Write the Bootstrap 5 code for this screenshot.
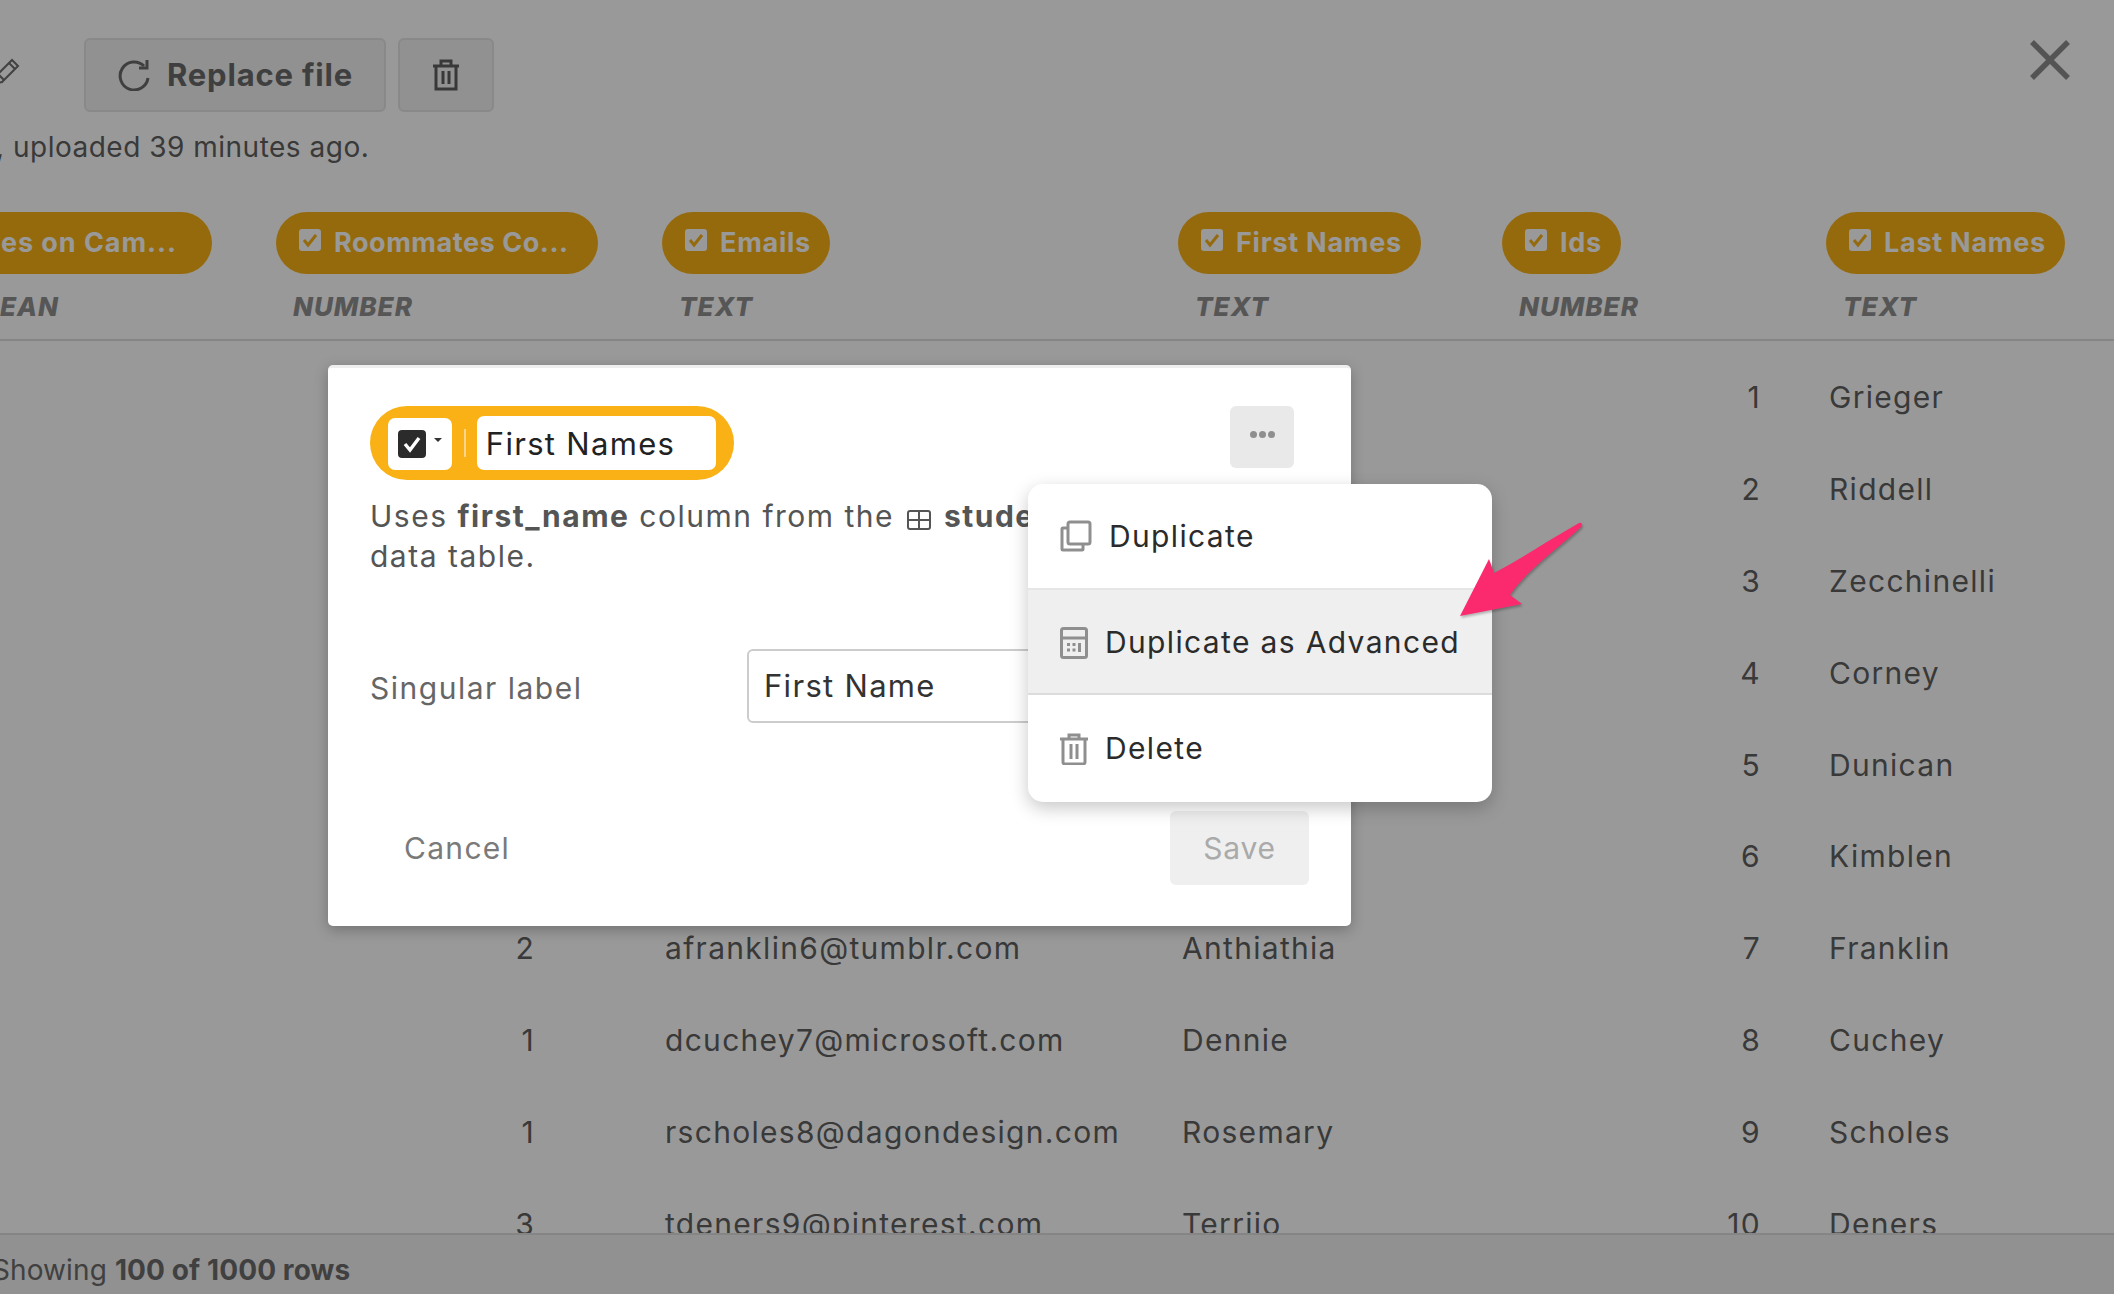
<!doctype html>
<html lang="en">
<head>
<meta charset="utf-8">
<title>Data table columns</title>
<link href="https://cdn.jsdelivr.net/npm/bootstrap@5.3.0/dist/css/bootstrap.min.css" rel="stylesheet">
<style>
html,body{height:100%}
body{font-family:"Inter","Open Sans","Liberation Sans",sans-serif;background:#fff;color:#5f5f5f;overflow:hidden;position:relative;font-size:28px}
.sheet{height:1294px;overflow:hidden}
.topbar{padding:38px 44px 0 0;height:112px}
.pencil-wrap{width:84px;height:74px;overflow:hidden}
.tool-btn{height:74px;background:#f2f2f2;border:2px solid #e4e4e4;border-radius:6px;color:#6a6a6a;font-weight:700;font-size:31px;letter-spacing:.8px}
.tool-btn.replace{width:302px;gap:16px}
.tool-btn.bin{width:96px;margin-left:12px}
.close-x{margin-top:2px}
.subline{height:68px;line-height:71px;margin-left:-4px;font-size:28px;letter-spacing:.5px}
.cols{display:grid;grid-template-columns:276px 386px 516px 324px 324px 288px}
.pill-row{margin-top:32px}
.col-pill{height:62px;border-radius:31px;background:#f9b115;color:#fff;font-weight:700;font-size:27px;padding:0 19px 0 23px;gap:13px;white-space:nowrap;letter-spacing:.75px}
.col-pill svg{margin-top:-6px;flex:none}
.pill-end{margin-right:64px;padding-right:35px;letter-spacing:.95px}
.pill-wide{width:322px;letter-spacing:.55px}
.clip-left{overflow:hidden}
.type-row{height:67px;border-bottom:2px solid #dedede;font-style:italic;font-weight:800;font-size:26px;color:#8f8f8f;padding-top:18px;letter-spacing:1px}
.type-row>div{padding-left:17px;line-height:30px}
.type-row>.bool{padding:0 217px 0 0;white-space:nowrap;overflow:hidden}
.table-area{height:892px;overflow:hidden;padding-top:11px}
.data-row{height:91.9px;line-height:91.9px;font-size:30px;color:#5f5f5f;letter-spacing:1.3px}
.num-a{text-align:right;padding-right:127px}
.num-b{text-align:right;padding-right:65px}
.txt{padding-left:3px}
.txt-b{padding-left:4px}
.foot-bar{height:61px;line-height:71px;border-top:2px solid #dedede;background:#f2f2f2;margin-left:-8px;font-size:28px;color:#6c6c6c;letter-spacing:.1px}
.shade{position:absolute;inset:0;background:rgba(0,0,0,.4)}
.dlg{position:absolute;left:328px;top:365px;width:1023px;height:561px;background:#fff;border-radius:5px;border-top:3px solid #eee;box-shadow:0 4px 14px rgba(0,0,0,.25);padding:38px 42px 0;color:#555}
.name-pill{height:74px;width:364px;background:#f9b115;border-radius:37px;padding:10px 18px;margin-left:0}
.kind-box{width:64px;height:52px;margin-top:2px;background:#fff;border-radius:7px;padding-left:10px;gap:8px}
.kind-caret{width:0;height:0;border-left:4px solid transparent;border-right:4px solid transparent;border-top:4px solid #333;margin-top:-8px}
.pill-sep{width:2px;height:28px;background:#fcd58a;margin:0 11px 0 12px;align-self:center}
.name-box{width:240px;height:54px;background:#fff;border-radius:7px;color:#222;line-height:56px;padding-left:9px;font-size:31px;letter-spacing:1.3px}
.more-btn{width:64px;height:62px;background:#e9e9e9;border-radius:6px;margin-right:15px;gap:2px;padding-bottom:6px}
.dot{width:7px;height:7px;border-radius:50%;background:#8f8f8f}
.desc{font-size:30px;line-height:39.5px;margin-top:17px;letter-spacing:1.5px;width:760px;height:152px}
.desc svg{vertical-align:-3px;margin:0 3px}
.label-row{height:74px}
.label-txt{width:377px;font-size:30px;color:#666;letter-spacing:1.5px;padding-top:4px}
.label-input{width:562px;height:74px;border:2px solid #ccc;border-radius:6px;font-size:31px;color:#333;padding:0 15px;letter-spacing:1.3px}
.dlg-foot{margin-top:88px;padding-left:33px;width:939px}
.cancel{font-size:30px;color:#7a7a7a;letter-spacing:1.3px;margin-left:1px}
.save{width:139px;height:74px;background:#efefef;border-radius:6px;color:#aaa;font-size:30px;letter-spacing:.8px}
.pop-menu{position:absolute;left:700px;top:116px;width:464px;height:318px;background:#fff;border-radius:15px;box-shadow:0 6px 18px rgba(0,0,0,.22);overflow:hidden}
.pop-item{padding-left:32px;color:#2b2b2b;font-size:30px;letter-spacing:1.35px;gap:17px}
.pop-item.one{height:104px;gap:17px}
.pop-item.two{height:107px;background:#efefef;border-top:2px solid #e6e6e6;border-bottom:2px solid #dcdcdc;padding-top:2px}
.pop-item.three{height:107px}
.pointer{position:absolute;left:1450px;top:515px;filter:drop-shadow(1px 2px 1px rgba(0,0,0,.25))}
</style>
</head>
<body>
<div class="sheet d-flex flex-column">
  <div class="topbar d-flex flex-shrink-0">
    <div class="pencil-wrap d-flex align-items-center flex-shrink-0">
      <svg width="30" height="30" viewBox="0 0 30 30" style="margin-left:-10px;margin-top:-6px" fill="none" stroke="#6f6f6f" stroke-width="2"><path d="M4 27l2-8L22 3l6 6L12 25z"/><path d="M19 6l6 6M8 17l6 6"/></svg>
    </div>
    <button class="btn tool-btn replace d-flex align-items-center justify-content-center p-0" type="button">
      <svg width="34" height="32" viewBox="0 0 34 32" fill="none" stroke="#6a6a6a" stroke-width="3"><path d="M27 7A14 14 0 1 0 31 19"/><path d="M30 1v8h-8" /></svg>
      Replace file
    </button>
    <button class="btn tool-btn bin d-flex align-items-center justify-content-center p-0" type="button" aria-label="Delete file">
      <svg width="28" height="32" viewBox="0 0 28 32" fill="none" stroke="#5e5e5e" stroke-width="3"><path d="M1 7h26M9 6V2h10v4M4 7v23h20V7M11 12v13M17 12v13"/></svg>
    </button>
    <svg class="close-x ms-auto" width="40" height="40" viewBox="0 0 40 40" fill="none" stroke="#8c8c8c" stroke-width="5.500"><path d="M2 2l36 36M38 2L2 38"/></svg>
  </div>
  <div class="subline flex-shrink-0">, uploaded 39 minutes ago.</div>
  <div class="cols pill-row flex-shrink-0">
    <div class="clip-left d-flex justify-content-end">
      <div class="col-pill pill-end d-flex align-items-center flex-shrink-0">Lives on Cam...</div>
    </div>
    <div><div class="col-pill pill-wide d-inline-flex align-items-center"><svg width="22" height="22" viewBox="0 0 22 22"><rect width="22" height="22" rx="3" fill="#fff"/><path d="M5 11l4 5 8-10" fill="none" stroke="#f9b115" stroke-width="3"/></svg>Roommates Co...</div></div>
    <div><div class="col-pill d-inline-flex align-items-center"><svg width="22" height="22" viewBox="0 0 22 22"><rect width="22" height="22" rx="3" fill="#fff"/><path d="M5 11l4 5 8-10" fill="none" stroke="#f9b115" stroke-width="3"/></svg>Emails</div></div>
    <div><div class="col-pill d-inline-flex align-items-center"><svg width="22" height="22" viewBox="0 0 22 22"><rect width="22" height="22" rx="3" fill="#fff"/><path d="M5 11l4 5 8-10" fill="none" stroke="#f9b115" stroke-width="3"/></svg>First Names</div></div>
    <div><div class="col-pill d-inline-flex align-items-center"><svg width="22" height="22" viewBox="0 0 22 22"><rect width="22" height="22" rx="3" fill="#fff"/><path d="M5 11l4 5 8-10" fill="none" stroke="#f9b115" stroke-width="3"/></svg>Ids</div></div>
    <div><div class="col-pill d-inline-flex align-items-center"><svg width="22" height="22" viewBox="0 0 22 22"><rect width="22" height="22" rx="3" fill="#fff"/><path d="M5 11l4 5 8-10" fill="none" stroke="#f9b115" stroke-width="3"/></svg>Last Names</div></div>
  </div>
  <div class="cols type-row flex-shrink-0">
    <div class="bool d-flex justify-content-end"><span class="flex-shrink-0">BOOLEAN</span></div><div>NUMBER</div><div>TEXT</div><div>TEXT</div><div>NUMBER</div><div>TEXT</div>
  </div>
  <div class="table-area flex-shrink-0">
    <div class="cols data-row"><div></div><div></div><div></div><div></div><div class="num-b">1</div><div class="txt">Grieger</div></div>
    <div class="cols data-row"><div></div><div></div><div></div><div></div><div class="num-b">2</div><div class="txt">Riddell</div></div>
    <div class="cols data-row"><div></div><div></div><div></div><div></div><div class="num-b">3</div><div class="txt">Zecchinelli</div></div>
    <div class="cols data-row"><div></div><div></div><div></div><div></div><div class="num-b">4</div><div class="txt">Corney</div></div>
    <div class="cols data-row"><div></div><div></div><div></div><div></div><div class="num-b">5</div><div class="txt">Dunican</div></div>
    <div class="cols data-row"><div></div><div></div><div></div><div></div><div class="num-b">6</div><div class="txt">Kimblen</div></div>
    <div class="cols data-row"><div></div><div class="num-a">2</div><div class="txt">afranklin6@tumblr.com</div><div class="txt-b">Anthiathia</div><div class="num-b">7</div><div class="txt">Franklin</div></div>
    <div class="cols data-row"><div></div><div class="num-a">1</div><div class="txt">dcuchey7@microsoft.com</div><div class="txt-b">Dennie</div><div class="num-b">8</div><div class="txt">Cuchey</div></div>
    <div class="cols data-row"><div></div><div class="num-a">1</div><div class="txt">rscholes8@dagondesign.com</div><div class="txt-b">Rosemary</div><div class="num-b">9</div><div class="txt">Scholes</div></div>
    <div class="cols data-row"><div></div><div class="num-a">3</div><div class="txt">tdeners9@pinterest.com</div><div class="txt-b">Terriio</div><div class="num-b">10</div><div class="txt">Deners</div></div>
  </div>
  <div class="foot-bar flex-shrink-0">Showing <b>100 of 1000 rows</b></div>
</div>

<div class="shade"></div>

<div class="dlg">
  <div class="d-flex justify-content-between">
    <div class="name-pill d-flex">
      <div class="kind-box d-flex align-items-center">
        <svg width="28" height="28" viewBox="0 0 28 28"><rect width="28" height="28" rx="4" fill="#2b2b2b"/><path d="M7 14l5 6 9-12" fill="none" stroke="#fff" stroke-width="3.400"/></svg>
        <span class="kind-caret"></span>
      </div>
      <span class="pill-sep"></span>
      <div class="name-box">First Names</div>
    </div>
    <div class="more-btn d-flex align-items-center justify-content-center" role="button" aria-label="More">
      <span class="dot"></span><span class="dot"></span><span class="dot"></span>
    </div>
  </div>
  <div class="desc">Uses <b>first_name</b> column from the <svg width="24" height="20" viewBox="0 0 24 20" fill="none" stroke="#555" stroke-width="2"><rect x="1" y="1" width="22" height="18" rx="2"/><path d="M1 10h22M12 1v18"/></svg> <b>students</b> data table.</div>
  <div class="label-row d-flex align-items-center">
    <div class="label-txt">Singular label</div>
    <div class="label-input d-flex align-items-center">First Name</div>
  </div>
  <div class="dlg-foot d-flex justify-content-between align-items-center">
    <span class="cancel">Cancel</span>
    <div class="save d-flex align-items-center justify-content-center">Save</div>
  </div>
  <div class="pop-menu">
    <div class="pop-item one d-flex align-items-center">
      <svg width="32" height="32" viewBox="0 0 32 32" fill="none" stroke="#8f8f8f" stroke-width="3"><rect x="8" y="2" width="22" height="22" rx="2"/><path d="M8 8H3a1 1 0 0 0-1 1v20a1 1 0 0 0 1 1h19a1 1 0 0 0 1-1v-5"/></svg>
      <span>Duplicate</span>
    </div>
    <div class="pop-item two d-flex align-items-center">
      <svg width="28" height="32" viewBox="0 0 28 32" fill="none" stroke="#8f8f8f" stroke-width="3"><rect x="1.500" y="1.500" width="25" height="29" rx="2"/><path d="M2 11h24"/><path d="M7 16h3v3H7zM12.500 16h3v3h-3zM18 16h3v9h-3zM7 21.500h3v3H7zM12.500 21.500h3v3h-3z" fill="#8f8f8f" stroke="none"/></svg>
      <span>Duplicate as Advanced</span>
    </div>
    <div class="pop-item three d-flex align-items-center">
      <svg width="28" height="32" viewBox="0 0 28 32" fill="none" stroke="#8f8f8f" stroke-width="3"><path d="M0 6h28M9 5V2h10v3M3 6v23a2 2 0 0 0 2 2h18a2 2 0 0 0 2-2V6M11 11v15M17 11v15"/></svg>
      <span>Delete</span>
    </div>
  </div>
</div>

<svg class="pointer" width="140" height="110" viewBox="0 0 140 110"><path d="M10 101L39 44l5 14c25-13 55-33 85-50 3-1 4 2 2 4-20 19-55 44-71 68l12 9z" fill="#fb2a6e"/></svg>
</body>
</html>
